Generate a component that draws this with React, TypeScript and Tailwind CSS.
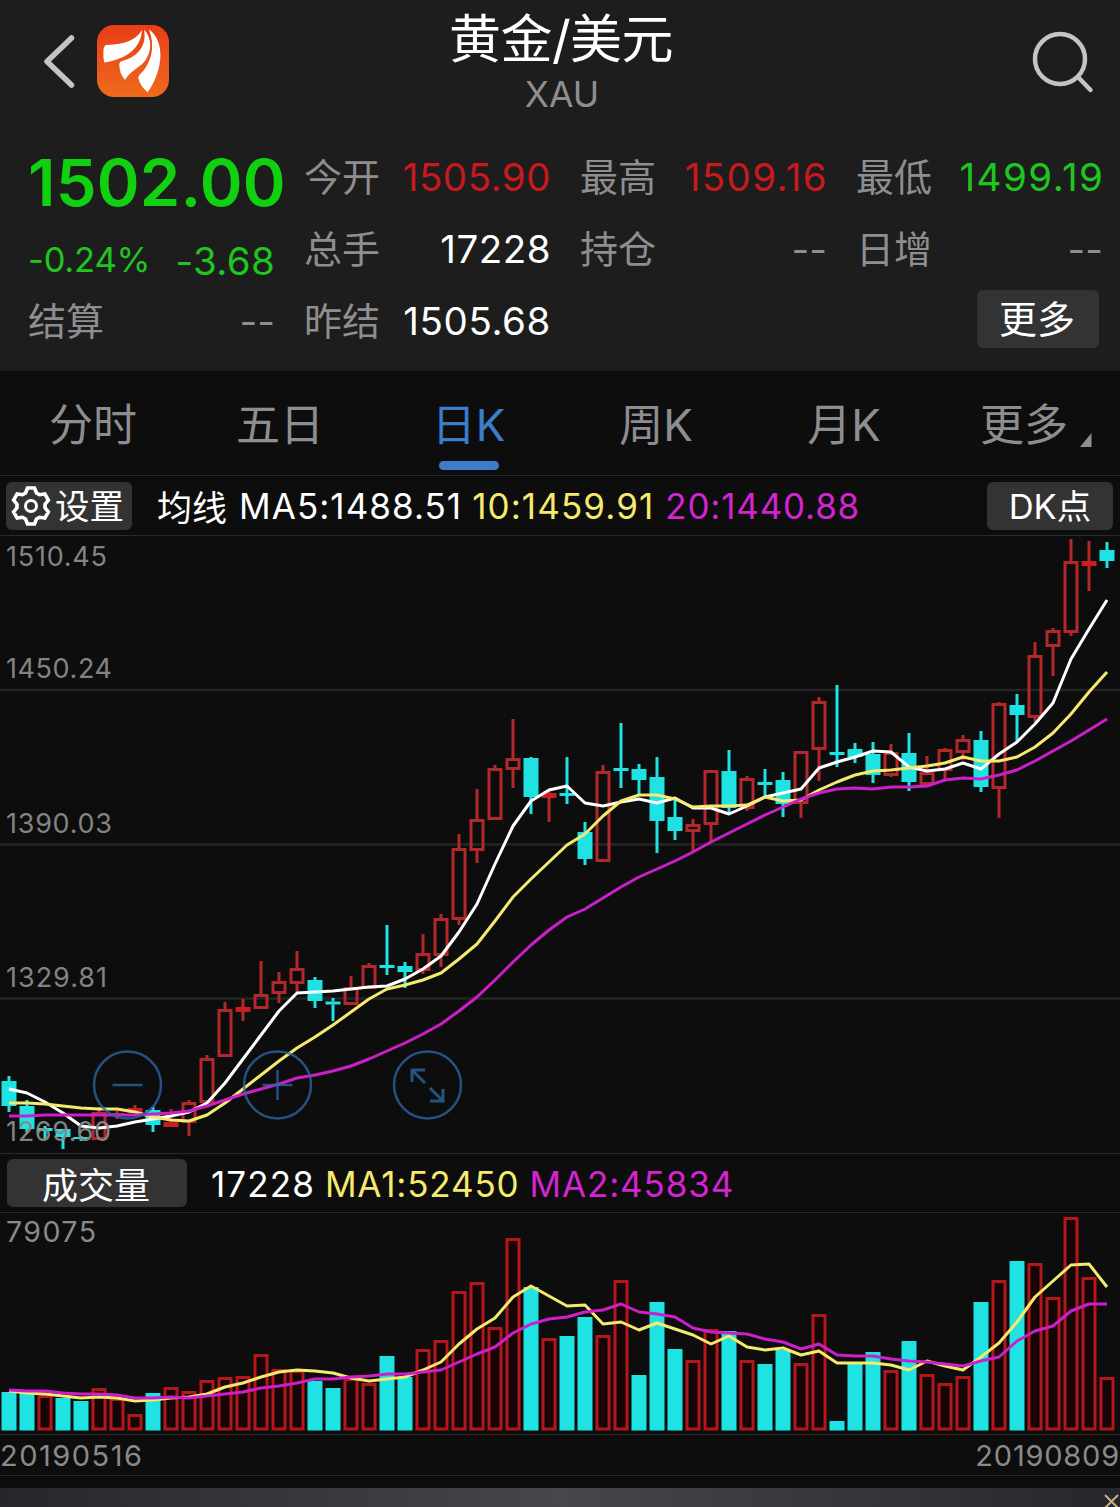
import React, { useState } from "react";

interface Candle {
  up: boolean;
  high: number;
  top: number;
  bottom: number;
  low: number;
}

interface QuoteItem {
  label: string;
  value: string;
  color: string;
  spacing: string;
}

const STEP = 18;
const BAR = 15;
const RED = "#b3282c";
const CYAN = "#1fe3e3";

// up, high, top, bottom, low
const rawCandles: number[][] = [
  [0, 1076, 1081, 1106, 1112],
  [0, 1100, 1106, 1129, 1133],
  [0, 1126, 1128, 1131, 1139],
  [0, 1129, 1129, 1137, 1149],
  [0, 1136, 1137, 1139, 1141],
  [1, 1107, 1112, 1140, 1140],
  [1, 1111, 1113, 1116, 1119],
  [1, 1105, 1108, 1113, 1113],
  [0, 1107, 1110, 1125, 1132],
  [1, 1109, 1122, 1127, 1127],
  [1, 1100, 1102, 1123, 1136],
  [1, 1055, 1058, 1103, 1103],
  [1, 1002, 1009, 1057, 1057],
  [1, 999, 1007, 1012, 1021],
  [1, 961, 994, 1009, 1009],
  [1, 972, 981, 994, 1003],
  [1, 951, 968, 984, 992],
  [0, 977, 980, 1001, 1008],
  [0, 998, 1001.5, 1004.5, 1021],
  [1, 976, 987, 1005, 1005],
  [1, 963, 965, 989, 989],
  [0, 925, 965, 968, 975],
  [0, 962, 966, 972, 988],
  [1, 934, 953, 971, 974],
  [1, 914, 918, 956, 967],
  [1, 834, 848, 920, 925],
  [1, 789, 819, 851, 863],
  [1, 765, 768, 820, 820],
  [1, 719, 758, 770, 788],
  [0, 757, 758, 797, 814],
  [1, 790, 793, 798, 822],
  [0, 757, 793, 796, 804],
  [0, 822, 832, 859, 865],
  [1, 765, 771, 862, 862],
  [0, 723, 768, 771, 788],
  [0, 764, 769, 780, 795],
  [0, 757, 777, 821, 853],
  [0, 800, 817, 831, 840],
  [1, 819, 824, 832, 852],
  [1, 770, 770, 825, 843],
  [0, 750, 771, 808, 815],
  [1, 776, 778, 809, 811],
  [0, 769, 782, 785, 797],
  [0, 772, 780, 804, 817],
  [1, 751, 751, 804, 818],
  [1, 697, 701, 750, 781],
  [0, 685, 752, 755, 767],
  [0, 743, 749, 757, 763],
  [0, 742, 754, 775, 783],
  [1, 744, 752, 776, 777],
  [0, 733, 753, 782, 791],
  [1, 756, 772, 785, 785],
  [1, 748, 749, 771, 780],
  [1, 735, 739, 753, 760],
  [0, 731, 740, 787, 792],
  [1, 702, 703, 789, 818],
  [0, 694, 705, 715, 742],
  [1, 642, 655, 718, 722],
  [1, 628, 630, 647, 676],
  [1, 539, 561, 633, 636],
  [1, 541, 561, 566, 591],
  [0, 542, 550, 561, 568],
];

const candles: Candle[] = rawCandles.map((c) => ({
  up: c[0] === 1,
  high: c[1],
  top: c[2],
  bottom: c[3],
  low: c[4],
}));

const ma5 = [
  1089, 1093, 1102, 1113, 1126, 1128, 1126, 1122, 1119, 1116, 1112, 1103, 1083,
  1059, 1035, 1011, 993, 992, 991, 989, 987, 986, 979, 969, 956, 932, 904, 864,
  826, 801, 790, 786, 803, 806, 802, 799, 803, 798, 808, 808, 814, 806, 797,
  793, 789, 768, 762, 757, 751, 752, 767, 771, 769, 763, 769, 754, 742, 724,
  703, 659, 629, 600,
];

const ma10 = [
  1103, 1103, 1104, 1106, 1108, 1109, 1109, 1112, 1117, 1120, 1121, 1115, 1103,
  1089, 1075, 1061, 1048, 1037, 1025, 1012, 999, 989, 985, 980, 973, 959, 944,
  921, 897, 879, 862, 845, 834, 816, 801, 795, 795, 799, 807, 806, 806, 805,
  797, 801, 800, 790, 782, 775, 771, 770, 768, 766, 763, 757, 761, 761, 757,
  747, 733, 714, 692, 672,
];

const ma20 = [
  1116, 1116, 1115, 1115, 1115, 1115, 1115, 1115, 1114, 1113, 1111, 1106, 1100,
  1094, 1089, 1084, 1078, 1075, 1071, 1066, 1059, 1051, 1043, 1034, 1024, 1011,
  997, 980, 962, 945, 930, 917, 909, 898, 887, 877, 869, 861, 852, 842, 833,
  824, 815, 807, 799, 793, 789, 788, 789, 787, 787, 786, 780, 778, 779, 775,
  770, 761, 751, 741, 730, 719,
];

const volumes = [
  1392, 1393, 1395, 1398, 1401, 1388, 1398, 1414, 1393, 1387, 1391, 1380, 1377,
  1376, 1354, 1369, 1370, 1381, 1388, 1378, 1383, 1356, 1377, 1349, 1340, 1291,
  1282, 1327, 1238, 1287, 1338, 1336, 1317, 1335, 1280, 1375, 1302, 1349, 1360,
  1329, 1331, 1360, 1364, 1350, 1363, 1314, 1421, 1362, 1352, 1370, 1341, 1374,
  1383, 1376, 1302, 1280, 1261, 1263, 1297, 1217, 1277, 1377,
];

// days whose volume bar is red although the candle is cyan
const redVolume = [2, 34, 61];

const volMa1 = [
  1391, 1393, 1394, 1396, 1398, 1397, 1398, 1401, 1400, 1398, 1397, 1394, 1387,
  1383, 1377, 1372, 1370, 1371, 1373, 1378, 1381, 1379, 1377, 1370, 1362, 1344,
  1329, 1318, 1297, 1286, 1296, 1306, 1305, 1324, 1322, 1330, 1323, 1329, 1335,
  1344, 1336, 1347, 1350, 1348, 1355, 1351, 1363, 1363, 1363, 1365, 1370, 1361,
  1366, 1370, 1357, 1343, 1322, 1297, 1281, 1265, 1264, 1287,
];

const volMa2 = [
  1390, 1391, 1391, 1393, 1394, 1394, 1395, 1398, 1398, 1397, 1398, 1396, 1394,
  1392, 1388, 1386, 1383, 1379, 1379, 1377, 1376, 1374, 1374, 1372, 1370, 1362,
  1354, 1347, 1333, 1324, 1319, 1317, 1312, 1310, 1304, 1312, 1314, 1317, 1328,
  1332, 1333, 1334, 1339, 1342, 1349, 1344, 1355, 1356, 1356, 1359, 1361, 1362,
  1364, 1366, 1361, 1357, 1341, 1331, 1326, 1311, 1304, 1304,
];

const priceLabels = [
  { text: "1510.45", y: 565.5, w: 101 },
  { text: "1450.24", y: 677.5, w: 106 },
  { text: "1390.03", y: 832.5, w: 106 },
  { text: "1329.81", y: 986.5, w: 101 },
  { text: "1269.60", y: 1140.5, w: 105 },
];

const tabs = ["分时", "五日", "日K", "周K", "月K"];

const toPoints = (values: number[]) =>
  values.map((y, i) => `${9 + i * STEP},${y}`).join(" ");

function Logo() {
  return (
    <svg className="h-[72px] w-[72px]" viewBox="0 0 72 72">
      <defs>
        <linearGradient id="logoBg" x1="0" y1="0" x2="0" y2="1">
          <stop offset="0" stopColor="#e83e17" />
          <stop offset="1" stopColor="#ee6a1c" />
        </linearGradient>
      </defs>
      <rect width="72" height="72" rx="17" fill="url(#logoBg)" />
      <path
        d="M45 5C39 15 28 19.500 10 20Q7 20 6.400 25Q6 32 7.200 37.500C25 35 44 26 45 5Z"
        fill="#fff"
      />
      <path
        d="M47 4.500C55 13 55 25 49 34.500C43 43 34 45 28 55Q22 48 22.300 39Q22.500 36 27 35.500C41 31 50 21 47 4.500Z"
        fill="#fff"
      />
      <path
        d="M52 4.500C68 16 67 44 50.700 67.300Q43 61 41.300 53C41 50 45 48 47 45C55 34 58 20 52 4.500Z"
        fill="#fff"
      />
    </svg>
  );
}

function GearIcon() {
  const angles = [0, 60, 120, 180, 240, 300];
  const tooth = [
    [-5.5, -13],
    [-3.5, -18],
    [3.5, -18],
    [5.5, -13],
  ];
  const points = angles
    .map((a) => {
      const r = (a * Math.PI) / 180;
      return tooth
        .map(
          ([x, y]) =>
            `${(x * Math.cos(r) - y * Math.sin(r)).toFixed(2)},${(
              x * Math.sin(r) +
              y * Math.cos(r)
            ).toFixed(2)}`
        )
        .join(" ");
    })
    .join(" ");

  return (
    <svg
      className="h-10 w-10 shrink-0"
      viewBox="-20 -20 40 40"
      fill="none"
      stroke="#fff"
      strokeWidth="3.600"
    >
      <polygon points={points} />
      <circle r="5.500" strokeWidth="3" />
    </svg>
  );
}

function CandleChart() {
  return (
    <svg
      className="block h-[617px] w-full"
      viewBox="0 536 1120 617"
      fontFamily="Inter, sans-serif"
    >
      {[690, 844.5, 998.5].map((y) => (
        <line key={y} x1="0" x2="1120" y1={y} y2={y} stroke="#242424" strokeWidth="2.500" />
      ))}
      {candles.map((c, i) => {
        const cx = 9 + i * STEP;
        const color = c.up ? RED : CYAN;
        const h = c.bottom - c.top;
        const hollow = c.up && h > 6;
        return (
          <g key={i} stroke={color} strokeWidth="3">
            {c.high < c.top && <line x1={cx} x2={cx} y1={c.high} y2={c.top} />}
            {c.low > c.bottom && <line x1={cx} x2={cx} y1={c.bottom} y2={c.low} />}
            {hollow ? (
              <rect
                x={cx - 6}
                y={c.top + 1.5}
                width={12}
                height={h - 3}
                fill="none"
              />
            ) : (
              <rect
                x={cx - BAR / 2}
                y={c.top}
                width={BAR}
                height={h}
                fill={c.up ? "#cc1e22" : CYAN}
                stroke="none"
              />
            )}
          </g>
        );
      })}
      <g fill="none" strokeWidth="3" strokeLinejoin="round">
        <polyline points={toPoints(ma5)} stroke="#ffffff" />
        <polyline points={toPoints(ma10)} stroke="#f5ea6e" />
        <polyline points={toPoints(ma20)} stroke="#cd1fc9" />
      </g>
      {priceLabels.map((l) => (
        <text
          key={l.text}
          x="6"
          y={l.y}
          fontSize="27"
          fill="#8a8a8a"
          textLength={l.w}
          opacity="0.950"
        >
          {l.text}
        </text>
      ))}
      {/* zoom controls */}
      <g fill="none" stroke="#2d66a3" strokeWidth="2.500" opacity="0.780">
        <circle cx="127.500" cy="1085" r="33.500" />
        <path d="M112.500 1085h30" />
        <circle cx="277.500" cy="1085" r="33.500" />
        <path d="M262.500 1085h30M277.500 1070v30" />
        <circle cx="427.500" cy="1085" r="33.500" />
        <path d="M425 1083L412 1070M412 1082v-12h13" strokeWidth="3" />
        <path d="M430 1088l13 13M443 1089v12h-13" strokeWidth="3" />
      </g>
    </svg>
  );
}

function VolumeChart() {
  return (
    <svg
      className="block h-[221px] w-full"
      viewBox="0 1213 1120 221"
      fontFamily="Inter, sans-serif"
    >
      <text x="6" y="1242" fontSize="28.500" fill="#8a8a8a" textLength="90">
        79075
      </text>
      {volumes.map((top, i) => {
        const x = 9 + i * STEP - BAR / 2;
        const up = candles[i].up || redVolume.includes(i);
        return up ? (
          <rect
            key={i}
            x={x + 1.5}
            y={top + 1.5}
            width={BAR - 3}
            height={1430.5 - top - 3}
            fill="#140506"
            stroke="#b5161a"
            strokeWidth="3"
          />
        ) : (
          <rect key={i} x={x} y={top} width={BAR} height={1430.5 - top} fill={CYAN} />
        );
      })}
      <g fill="none" strokeWidth="3" strokeLinejoin="round">
        <polyline points={toPoints(volMa1)} stroke="#f5ea6e" />
        <polyline points={toPoints(volMa2)} stroke="#cd1fc9" />
      </g>
    </svg>
  );
}

function Quote({ label, value, color, spacing }: QuoteItem) {
  return (
    <div className="flex items-center justify-between whitespace-nowrap">
      <span className="-mt-px text-[38px] text-[#8e8e90]">{label}</span>
      <span className={`text-[38.500px] ${color} ${spacing}`}>{value}</span>
    </div>
  );
}

function App() {
  const [active, setActive] = useState("日K");

  return (
    <div className="h-[1507px] w-[1120px] overflow-hidden bg-[#0d0d0d] font-['Inter','Noto_Sans_CJK_SC',sans-serif] font-[390] text-white">
      <header className="h-[371px] bg-[#1d1d1d]">
        <div className="grid h-[142px] grid-cols-[1fr_auto_1fr]">
          <div className="flex items-start pt-[25px] pl-[42px]">
            <svg
              className="mt-2 mr-5 h-[58px] w-[35px]"
              viewBox="0 0 35 58"
              fill="none"
              stroke="#c4c4c4"
              strokeWidth="5.500"
              strokeLinecap="round"
              strokeLinejoin="round"
            >
              <path d="M29.500 5L5 28.500L29.500 52" />
            </svg>
            <Logo />
          </div>
          <div className="flex flex-col items-center pl-[2px]">
            <h1 className="mt-[9px] text-[52px] leading-[62px] font-[390] tracking-[-0.500px] whitespace-nowrap">
              黄金/美元
            </h1>
            <p className="mt-[3px] pl-[2px] text-[35.500px] leading-[42px] font-[370] text-[#8e8e90]">
              XAU
            </p>
          </div>
          <div className="flex justify-end pt-[30px] pr-[25px]">
            <svg
              className="h-[64px] w-[64px]"
              viewBox="0 0 64 64"
              fill="none"
              stroke="#c4c4c4"
              strokeWidth="4.500"
              strokeLinecap="round"
            >
              <circle cx="29" cy="29" r="25" />
              <path d="M47 47L59.500 60" />
            </svg>
          </div>
        </div>

        <div className="grid grid-cols-[repeat(4,247px)] grid-rows-[repeat(3,72px)] gap-x-[29px] pl-7">
          <div className="flex items-center pt-[10px] text-[65px] font-semibold tracking-[0.200px] whitespace-nowrap text-[#10d010]">
            1502.00
          </div>
          <Quote label="今开" value="1505.90" color="text-[#c8191c]" spacing="tracking-[0.500px]" />
          <Quote label="最高" value="1509.16" color="text-[#c8191c]" spacing="-mr-px tracking-[1.400px]" />
          <Quote label="最低" value="1499.19" color="text-[#20c620]" spacing="-mr-[1.500px] tracking-[1.500px]" />

          <div className="flex items-center justify-between pt-[23px] whitespace-nowrap text-[#20c620]">
            <span className="-mt-1 text-[34.500px] tracking-[-0.200px]">-0.24%</span>
            <span className="text-[38.500px] tracking-[0.300px]">-3.68</span>
          </div>
          <Quote label="总手" value="17228" color="text-white" spacing="tracking-[0.500px]" />
          <Quote label="持仓" value="--" color="text-[#8e8e90]" spacing="tracking-[0px]" />
          <Quote label="日增" value="--" color="text-[#8e8e90]" spacing="tracking-[0px]" />

          <Quote label="结算" value="--" color="text-[#8e8e90]" spacing="tracking-[0px]" />
          <Quote label="昨结" value="1505.68" color="text-white" spacing="tracking-[0.600px]" />
          <div className="col-start-4 flex items-center justify-end pr-1">
            <button className="-mt-1.5 h-[58px] w-[122px] rounded-md bg-[#333333] pr-[2px] text-[38px] leading-[56px]">
              更多
            </button>
          </div>
        </div>
      </header>

      <nav className="grid h-[105px] grid-cols-[186px_repeat(4,188px)_1fr] border-b border-[#2a2a2a] text-[44px] text-[#8e8e90]">
        {tabs.map((tab) => (
          <button
            key={tab}
            onClick={() => setActive(tab)}
            className={
              tab === active
                ? "flex flex-col items-center pl-px text-[#3d7cc9]"
                : "flex flex-col items-center"
            }
          >
            <span className="mt-[21px] leading-[66px] whitespace-nowrap">{tab}</span>
            {tab === active && (
              <span className="mt-[3px] h-[9px] w-[60px] rounded-full bg-[#3d7cc9]" />
            )}
          </button>
        ))}
        <button className="flex items-start pl-[42px]">
          <span className="mt-[21px] leading-[66px] whitespace-nowrap">更多</span>
          <svg className="mt-[62px] ml-3 h-[14px] w-[12px]" viewBox="0 0 12 14">
            <path d="M11.500 0V14H0Z" fill="#8e8e90" />
          </svg>
        </button>
      </nav>

      <div className="flex h-[60px] items-center border-b border-[#2a2a2a] pr-[7px] pl-1.5 text-[35px] leading-none whitespace-nowrap">
        <button className="flex h-12 w-[126px] items-center rounded-md bg-[#333333] pl-[5px] text-[34.500px] leading-[48px]">
          <GearIcon />
          <span className="mt-[3px] ml-1">设置</span>
        </button>
        <span className="mt-[5px] ml-[25px]">均线</span>
        <span className="mt-0.5 ml-3 tracking-[1.050px]">MA5:1488.51</span>
        <span className="mt-0.5 ml-[10px] tracking-[1.100px] text-[#f5ea6e]">10:1459.91</span>
        <span className="mt-0.5 ml-[11px] tracking-[0.800px] text-[#d424cf]">20:1440.88</span>
        <button className="ml-auto h-12 w-[126px] rounded-md bg-[#333333] text-[34.500px] leading-[50px]">
          DK点
        </button>
      </div>

      <CandleChart />

      <div className="flex h-[60px] items-center border-y border-[#2a2a2a] px-[7px] text-[35px] leading-none whitespace-nowrap">
        <button className="h-12 w-[180px] rounded-md bg-[#333333] pt-[3px] pr-0.5 text-[36px] leading-[48px]">
          成交量
        </button>
        <span className="mt-0.5 ml-6 tracking-[1.100px]">17228</span>
        <span className="mt-0.5 ml-[10px] tracking-[0.850px] text-[#f5ea6e]">MA1:52450</span>
        <span className="mt-0.5 ml-[10px] tracking-[0.850px] text-[#d424cf]">MA2:45834</span>
      </div>

      <VolumeChart />

      <div className="flex h-[42px] items-center justify-between border-y border-[#2a2a2a] text-[29px] text-[#8a8a8a]">
        <span className="mt-0.5 tracking-[1.500px]">20190516</span>
        <span className="mt-0.5 tracking-[0.800px]">20190809</span>
      </div>

      <div className="mt-3 flex h-[19px] items-start justify-end bg-linear-to-r from-[#26272c] via-[#47464a] to-[#26272c] pr-px">
        <svg
          className="mt-[6px] h-[15px] w-[15px]"
          viewBox="0 0 15 15"
          stroke="#c9b184"
          strokeWidth="2"
        >
          <path d="M1 1L14 14M14 1L1 14" />
        </svg>
      </div>
    </div>
  );
}

export default App;
